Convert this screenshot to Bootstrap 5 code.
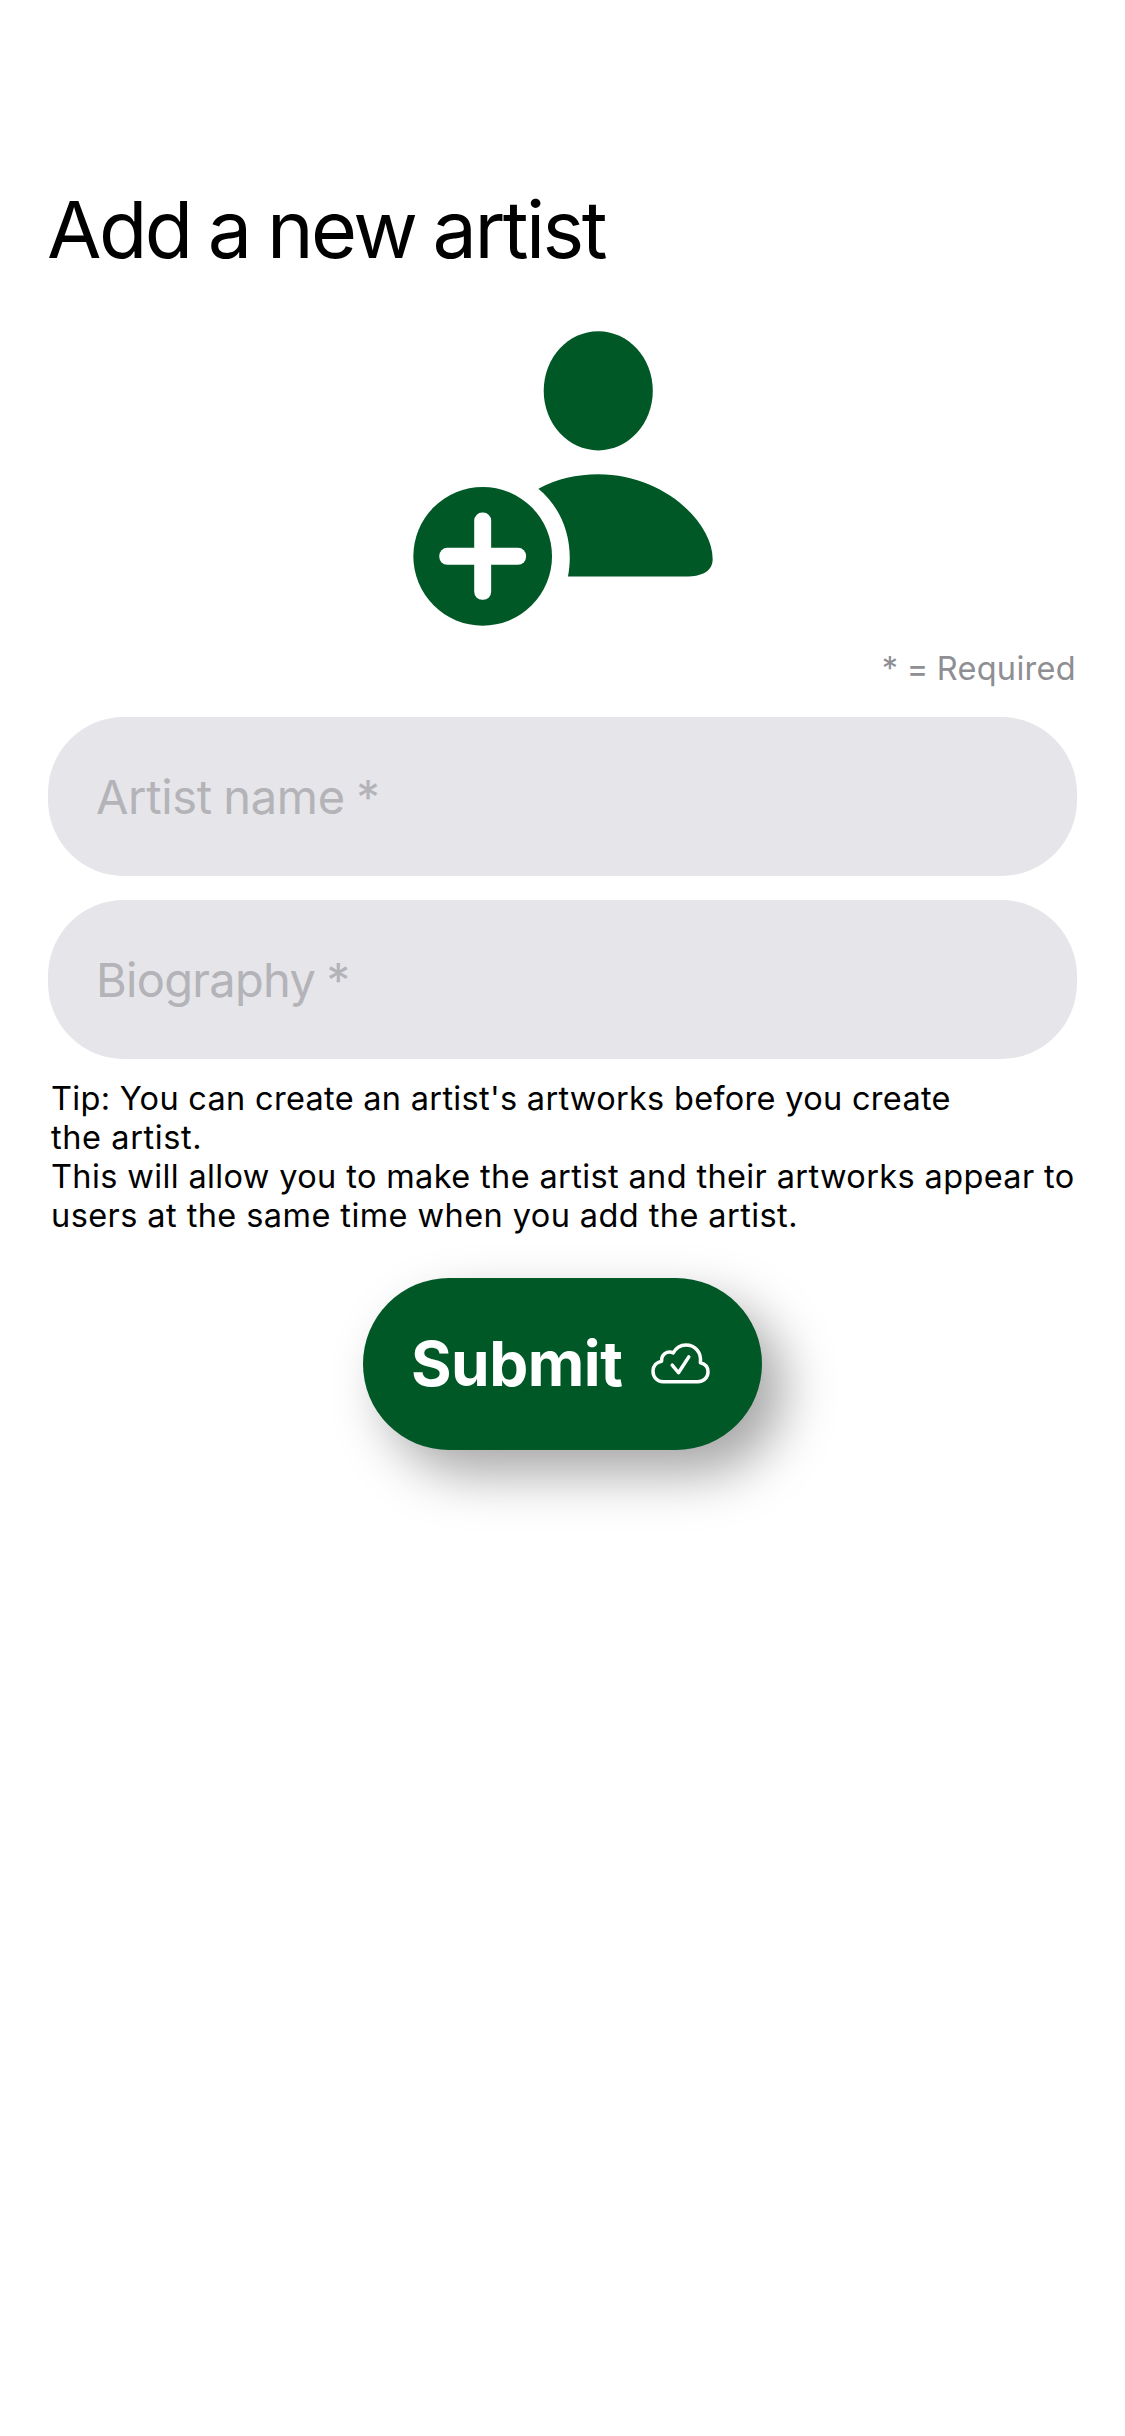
<!DOCTYPE html>
<html lang="en">
<head>
<meta charset="utf-8">
<meta name="viewport" content="width=device-width, initial-scale=1">
<title>Add a new artist</title>
<link href="https://cdn.jsdelivr.net/npm/bootstrap@5.3.0/dist/css/bootstrap.min.css" rel="stylesheet">
<style>
  :root { --brand: #005826; }
  body { font-family: Inter, "Liberation Sans", sans-serif; background: #fff; color: #000; }
  .screen { width: 1125px; min-height: 2436px; padding: 180px 48px 0; }
  .page-title { font-size: 79px; line-height: 98px; letter-spacing: -2.6px; word-spacing: -2.2px; font-weight: 400; margin-left: -1px; }
  .artist-icon { width: 300px; height: 295px; margin: 53px 0 0 1px; fill: var(--brand); }
  .required-note { font-size: 32.5px; line-height: 40px; letter-spacing: .3px; word-spacing: -1.2px; color: #8e8e93; margin: 23px 1px 28px 0; }
  .field, .field:focus { height: 159px; border: 0; border-radius: 76px; background: #e5e5ea; padding: 0 48px; font-size: 47px; letter-spacing: -.35px; word-spacing: -1.2px; color: #000; }
  .field.bio { letter-spacing: -.7px; }
  .field::placeholder { color: #b3b3b8; opacity: 1; }
  .tip { font-size: 32.5px; line-height: 39px; letter-spacing: .42px; margin: 20px 0 0 3px; white-space: nowrap; }
  .tip .lead-line { letter-spacing: .3px; }
  .tip .short-line { letter-spacing: .6px; }
  .tip .wide-line { letter-spacing: .37px; }
  .submit-btn, .submit-btn:hover { width: 399px; height: 172px; margin-top: 43px; padding: 0 52px 2px 48px; border: 0; border-radius: 86px; background: var(--brand); color: #fff; font-size: 62px; font-weight: 700; letter-spacing: -.5px; box-shadow: 22px 24px 52px rgba(0,0,0,.35); }
  .cloud { width: 59px; height: 41px; }
</style>
</head>
<body>
<main class="screen d-flex flex-column">
  <h1 class="page-title mt-0 mb-0"><span>Add a new artist</span></h1>
  <svg class="artist-icon align-self-center" viewBox="38 32 902 887" preserveAspectRatio="none" aria-hidden="true">
    <path d="M595 33C685 33 759 112 759 212C759 312 685 391 595 391C505 391 431 312 431 212C431 112 505 33 595 33Z"/>
    <path d="M415 506C470 477 530 463 595 463C790 463 939 606 939 718C939 752 910 770 858 770H504C523 668 491 570 415 506Z"/>
    <circle cx="247.500" cy="709.500" r="208.500"/>
    <rect x="222" y="578" width="51" height="262" rx="24" fill="#fff"/>
    <rect x="117" y="684" width="261" height="51" rx="24" fill="#fff"/>
  </svg>
  <div class="required-note text-end"><span>* = Required</span></div>
  <form class="d-flex flex-column">
    <div class="d-flex flex-column gap-4">
      <input class="form-control field" type="text" placeholder="Artist name *" aria-label="Artist name">
      <input class="form-control field bio" type="text" placeholder="Biography *" aria-label="Biography">
    </div>
    <p class="tip"><span class="lead-line">Tip: You can create an artist's artworks before you create</span><br><span class="short-line">the artist.</span><br><span class="wide-line">This will allow you to make the artist and their artworks appear to</span><br><span>users at the same time when you add the artist.</span></p>
    <button type="button" class="btn submit-btn align-self-center d-flex align-items-center justify-content-between">
      <span>Submit</span>
      <svg class="cloud" viewBox="0 0 178 124" preserveAspectRatio="none" fill="none" stroke="#fff" stroke-width="10.500" stroke-linecap="round" stroke-linejoin="round" aria-hidden="true">
        <path d="M37 117C18 117 6 103 6 85C6 69 17 58 32 55C31 36 47 22 67 30C76 14 89 6 105 6C134 6 153 29 149 60C164 63 172 73 172 87C172 104 160 117 141 117Z"/>
        <path d="M64 67L83 90L114 42"/>
      </svg>
    </button>
  </form>
</main>
<script src="https://cdn.jsdelivr.net/npm/bootstrap@5.3.0/dist/js/bootstrap.bundle.min.js"></script>
</body>
</html>
